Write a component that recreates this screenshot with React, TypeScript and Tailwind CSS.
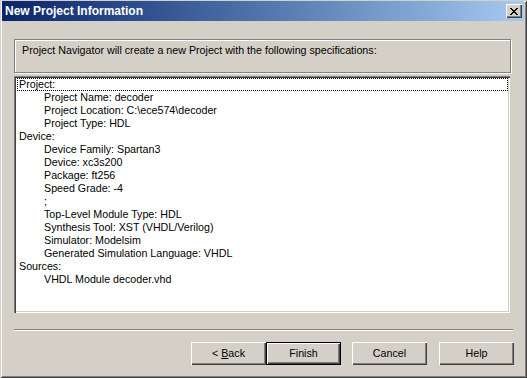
import React from "react";

const font = { fontFamily: '"Liberation Sans", Arial, sans-serif' };

function Btn({ label, def, u }: { label: React.ReactNode; def?: boolean; u?: boolean }) {
  return (
    <div
      className={
        "w-[75px] h-[23px] flex items-center justify-center text-[10.7px] text-black bg-[#d4d0c8] " +
        (def
          ? "border border-black shadow-[inset_1px_1px_#ffffff,inset_-1px_-1px_#404040,inset_-2px_-2px_#808080]"
          : "shadow-[inset_1px_1px_#ffffff,inset_-1px_-1px_#404040,inset_-2px_-2px_#808080]")
      }
    >
      {label}
    </div>
  );
}

export default function App() {
  const lines: [number, string][] = [
    [1, "Project Name: decoder"],
    [1, "Project Location: C:\\ece574\\decoder"],
    [1, "Project Type: HDL"],
    [0, "Device:"],
    [1, "Device Family: Spartan3"],
    [1, "Device: xc3s200"],
    [1, "Package: ft256"],
    [1, "Speed Grade: -4"],
    [1, ";"],
    [1, "Top-Level Module Type: HDL"],
    [1, "Synthesis Tool: XST (VHDL/Verilog)"],
    [1, "Simulator: Modelsim"],
    [1, "Generated Simulation Language: VHDL"],
    [0, "Sources:"],
    [1, "VHDL Module decoder.vhd"],
  ];
  return (
    <div
      style={font}
      className="w-[527px] h-[378px] bg-[#d4d0c8] flex flex-col shadow-[inset_1px_1px_#d4d0c8,inset_-1px_-1px_#404040,inset_2px_2px_#ffffff,inset_-2px_-2px_#808080] overflow-hidden"
    >
      {/* Title bar */}
      <div className="mt-[1px] ml-[2px] mr-[3px] h-[20px] bg-gradient-to-r from-[#0a246a] to-[#a6caf0] flex items-center justify-between pl-[3px] pr-[2px]">
        <span className="text-white font-bold text-[12px] leading-none">New Project Information</span>
        <div className="w-[16px] h-[14px] bg-[#d4d0c8] shadow-[inset_1px_1px_#ffffff,inset_-1px_-1px_#404040,inset_-2px_-2px_#808080] flex items-center justify-center">
          <svg width="8" height="7" viewBox="0 0 8 7" shapeRendering="crispEdges">
            <path d="M0 0h2v1h-2zM6 0h2v1h-2zM1 1h2v1h-2zM5 1h2v1h-2zM2 2h4v1h-4zM3 3h2v1h-2zM2 4h4v1h-4zM1 5h2v1h-2zM5 5h2v1h-2zM0 6h2v1h-2zM6 6h2v1h-2z" fill="#000" />
          </svg>
        </div>
      </div>

      <div className="pl-[14px] flex flex-col">
        {/* Info box */}
        <div className="mt-[18px] w-[497px] h-[34px] border border-[#808080] shadow-[inset_1px_1px_#ffffff,1px_1px_#ffffff] pl-[7px] pt-[4px] text-[10.7px] text-black leading-[13px]">
          Project Navigator will create a new Project with the following specifications:
        </div>

        {/* List box */}
        <div className="mt-[3px] w-[496px] h-[237px] bg-white shadow-[inset_1px_1px_#808080,inset_2px_2px_#404040,inset_-1px_-1px_#ffffff,inset_-2px_-2px_#d4d0c8] p-[2px] pl-[3px] flex flex-col text-[10.7px] text-black leading-[13px]">
          <div className="h-[13px] border border-dotted border-black flex items-center pl-[1px] leading-none">
            Project:
          </div>
          {lines.map(([ind, t], i) => (
            <div key={i} className={"h-[13px] whitespace-pre " + (ind ? "pl-[27px]" : "pl-[2px]")}>
              {t}
            </div>
          ))}
        </div>

        {/* Separator */}
        <div className="mt-[16px] w-[499px] h-[2px] border-t border-[#808080] border-b border-b-white" />

        {/* Buttons */}
        <div className="mt-[11px] flex w-[500px] justify-end">
          <Btn label={<span>&lt; <u>B</u>ack</span>} />
          <Btn label="Finish" def />
          <div className="ml-[11px]">
            <Btn label="Cancel" />
          </div>
          <div className="ml-[12px]">
            <Btn label="Help" />
          </div>
        </div>
      </div>
    </div>
  );
}
